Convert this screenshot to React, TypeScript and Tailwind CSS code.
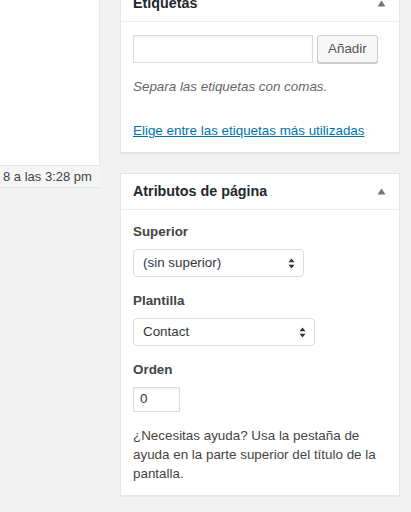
import React from 'react'

const font = { fontFamily: '"Liberation Sans", Arial, sans-serif' }

function Caret() {
  return (
    <svg width="9" height="7" viewBox="0 0 9 7" className="block">
      <path d="M4.5 0.5 L8.5 6.5 L0.5 6.5 Z" fill="#72777c" />
    </svg>
  )
}

function UpDown() {
  return (
    <svg width="7" height="11" viewBox="0 0 7 11" className="block">
      <path d="M3.5 0.5 L6.5 4.3 L0.5 4.3 Z" fill="#333" />
      <path d="M3.5 10.5 L6.5 6.7 L0.5 6.7 Z" fill="#333" />
    </svg>
  )
}

function Box({ title, children }: { title: string; children: React.ReactNode }) {
  return (
    <div className="bg-white border border-[#e5e5e5] shadow-[0_1px_1px_rgba(0,0,0,0.04)]">
      <div className="h-[36px] flex items-center justify-between pl-[12px] pr-[13px] border-b border-[#eee]">
        <h2 className="text-[14.3px] font-bold text-[#23282d] leading-[19px]">{title}</h2>
        <Caret />
      </div>
      <div className="px-[12px]">{children}</div>
    </div>
  )
}

function FakeSelect({ value, width }: { value: string; width: string }) {
  return (
    <div
      className={`${width} h-[28px] flex items-center justify-between pl-[9px] pr-[8px] border border-[#ddd] rounded-[4px] bg-white text-[13.4px] text-[#32373c]`}
    >
      <span>{value}</span>
      <UpDown />
    </div>
  )
}

export default function App() {
  return (
    <div className="min-h-[512px] bg-[#f1f1f1] flex items-start overflow-hidden text-[13.4px] text-[#444]" style={font}>
      <div className="w-[100px] shrink-0">
        <div className="h-[165px] bg-white border-r border-[#e5e5e5]" />
        <div className="h-[23px] bg-[#f5f5f5] border-t border-b border-[#e5e5e5] flex items-center pl-[3px] whitespace-nowrap overflow-hidden text-[13px] text-[#444]">
          8 a las 3:28 pm
        </div>
      </div>

      <div className="ml-[20px] w-[280px] shrink-0 mt-[-15px] flex flex-col gap-[20px]">
        <Box title="Etiquetas">
          <div className="pt-[13px] flex items-start gap-[4px]">
            <div className="w-[180px] h-[28px] border border-[#ddd] bg-white shadow-[inset_0_1px_2px_rgba(0,0,0,0.07)]" />
            <button className="h-[28px] px-[10px] bg-[#f7f7f7] border border-[#ccc] rounded-[3px] shadow-[0_1px_0_#ccc] text-[13.4px] text-[#555]">
              Añadir
            </button>
          </div>
          <p className="mt-[14px] italic text-[#666] leading-[19px]">Separa las etiquetas con comas.</p>
          <p className="mt-[25px] pb-[12px] leading-[19px]">
            <a className="text-[#0073aa] underline">Elige entre las etiquetas más utilizadas</a>
          </p>
        </Box>

        <Box title="Atributos de página">
          <p className="mt-[12px] font-bold text-[#444] leading-[19px]">Superior</p>
          <div className="mt-[8px]">
            <FakeSelect value="(sin superior)" width="w-[171px]" />
          </div>
          <p className="mt-[14px] font-bold text-[#444] leading-[19px]">Plantilla</p>
          <div className="mt-[8px]">
            <FakeSelect value="Contact" width="w-[182px]" />
          </div>
          <p className="mt-[14px] font-bold text-[#444] leading-[19px]">Orden</p>
          <div className="mt-[8px] w-[47px] h-[25px] border border-[#ddd] bg-white flex items-center pl-[6px] text-[#32373c] shadow-[inset_0_1px_2px_rgba(0,0,0,0.07)]">
            0
          </div>
          <p className="mt-[14px] pb-[12px] leading-[19px] text-[#444]">
            ¿Necesitas ayuda? Usa la pestaña de ayuda en la parte superior del título de la pantalla.
          </p>
        </Box>
      </div>
    </div>
  )
}
